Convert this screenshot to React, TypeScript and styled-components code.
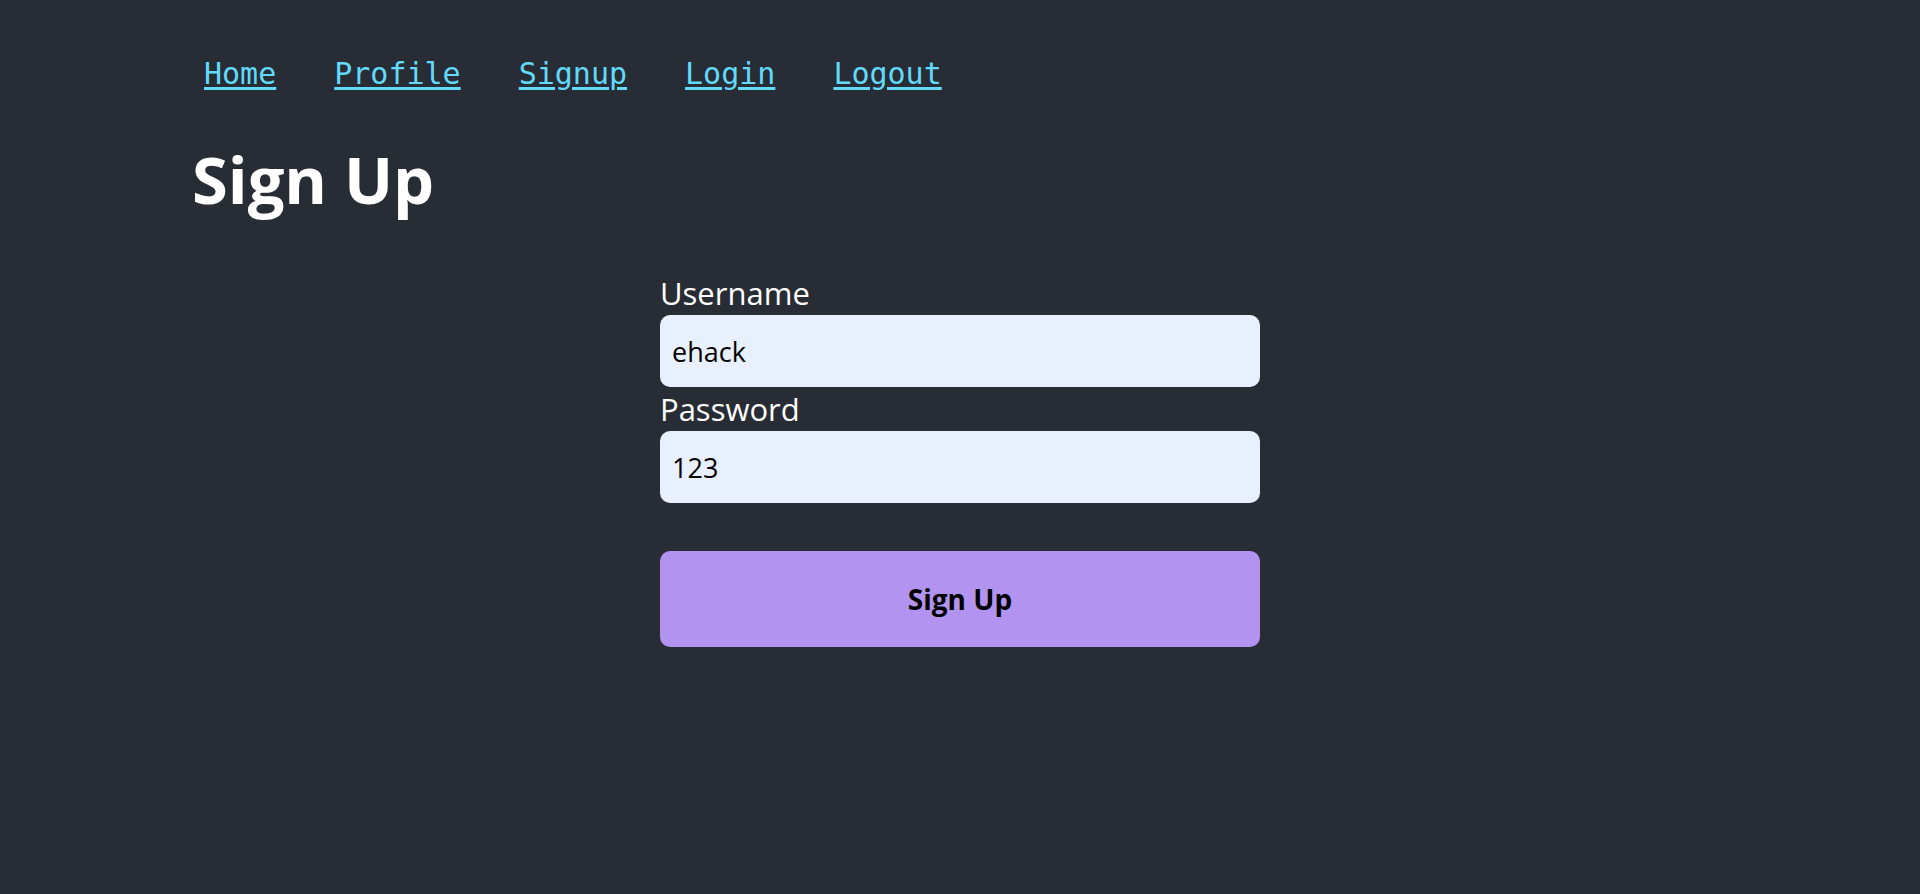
import styled, { createGlobalStyle } from "styled-components";

const GlobalStyle = createGlobalStyle`
  html, body {
    margin: 0;
    padding: 0;
    background: #282c34;
  }
  body {
    font-family: "Open Sans", "Noto Sans", sans-serif;
    color: #ffffff;
  }
`;

const Page = styled.div`
  min-height: 100vh;
  background: #282c34;
  padding: 0 192px;
  box-sizing: border-box;
`;

const Nav = styled.nav`
  display: flex;
  gap: 58px;
  padding: 56px 0 0 12px;
`;

const NavLink = styled.a`
  font-family: "DejaVu Sans Mono", "Liberation Mono", monospace;
  font-size: 30px;
  color: #61dafb;
  text-decoration: underline;
  text-underline-offset: 3px;
`;

const Title = styled.h1`
  margin: 44px 0 0;
  font-size: 65px;
  font-weight: 700;
  color: #ffffff;
`;

const Form = styled.form`
  width: 600px;
  margin: 48px auto 0;
  display: flex;
  flex-direction: column;
`;

const Label = styled.label`
  font-size: 31px;
  line-height: 44px;
  color: #ffffff;
`;

const Input = styled.input`
  box-sizing: border-box;
  width: 100%;
  height: 72px;
  padding: 0 12px;
  border: none;
  border-radius: 10px;
  background: #e8f0fe;
  color: #000000;
  font-family: "Open Sans", "Noto Sans", sans-serif;
  font-size: 27px;
  outline: none;
`;

const SubmitButton = styled.button`
  margin-top: 48px;
  height: 96px;
  width: 100%;
  border: none;
  border-radius: 10px;
  background: #b294f0;
  color: #000000;
  font-family: "Open Sans", "Noto Sans", sans-serif;
  font-size: 28px;
  font-weight: 700;
  cursor: pointer;
`;

const links = ["Home", "Profile", "Signup", "Login", "Logout"];

export default function App() {
  return (
    <>
      <GlobalStyle />
      <Page>
        <Nav>
          {links.map((l) => (
            <NavLink key={l} href={"#" + l.toLowerCase()}>
              {l}
            </NavLink>
          ))}
        </Nav>
        <Title>Sign Up</Title>
        <Form onSubmit={(e) => e.preventDefault()}>
          <Label htmlFor="username">Username</Label>
          <Input id="username" type="text" defaultValue="ehack" />
          <Label htmlFor="password">Password</Label>
          <Input id="password" type="text" defaultValue="123" />
          <SubmitButton type="submit">Sign Up</SubmitButton>
        </Form>
      </Page>
    </>
  );
}
